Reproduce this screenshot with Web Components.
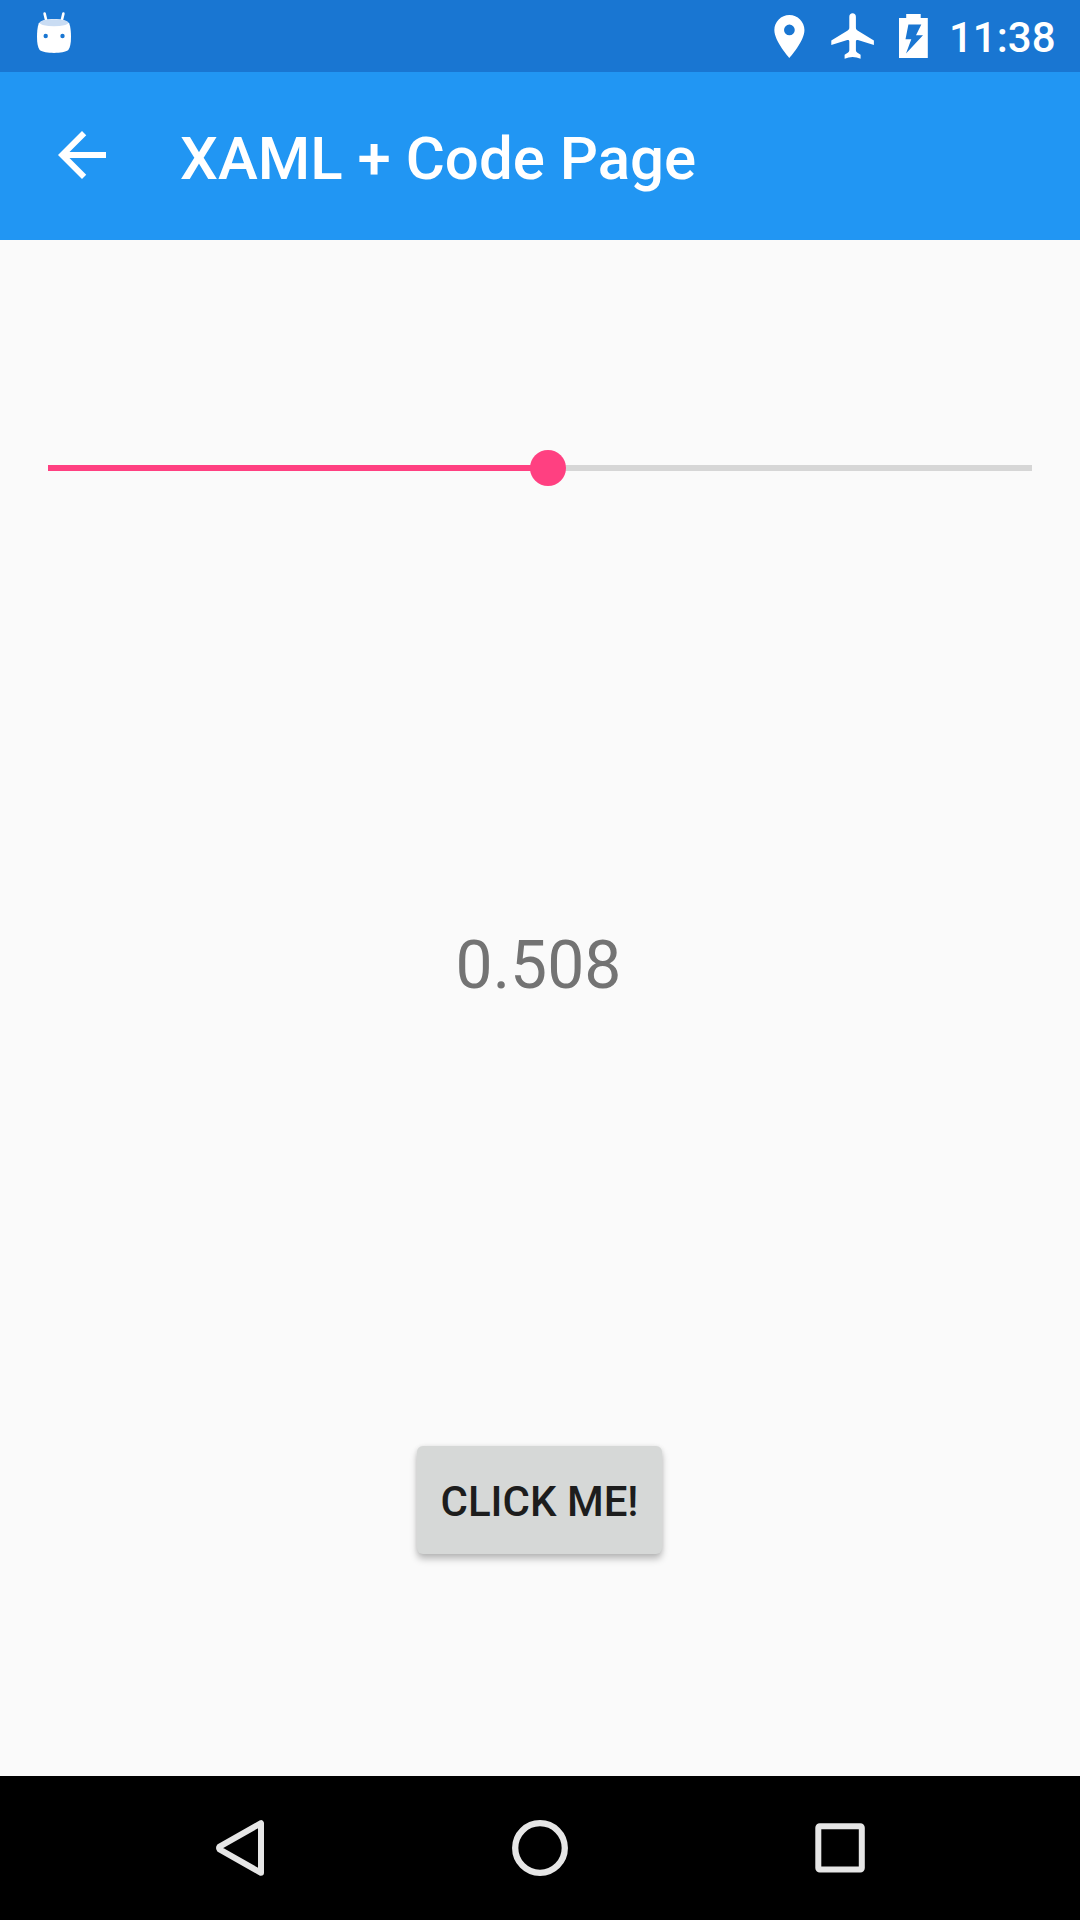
<!DOCTYPE html>
<html lang="en">
<head>
<meta charset="utf-8">
<title>XAML + Code Page</title>
<style>
html, body { margin: 0; height: 100%; }
body { font-family: Roboto, "Noto Sans", sans-serif; background: #fafafa; }
</style>
</head>
<body>
<phone-screen>
  <status-bar slot="status">11:38</status-bar>
  <app-bar slot="header">XAML + Code Page</app-bar>
  <value-slider value="0.508"></value-slider>
  <value-label>0.508</value-label>
  <raised-button>CLICK ME!</raised-button>
  <nav-bar slot="footer"></nav-bar>
</phone-screen>
<script>
const define = (name, html) => customElements.define(name, class extends HTMLElement {
  constructor() {
    super();
    this.attachShadow({ mode: "open" }).innerHTML = html;
  }
});

define("status-bar", `
<style>
:host { display: flex; align-items: center; height: 72px; box-sizing: border-box; padding: 0 0 0 36px; background: #1976d2; color: #fff; font-size: 42px; font-weight: 500; line-height: 48px; }
svg { display: block; flex: none; }
.gap { flex: 1; }
.time { box-sizing: border-box; width: 150px; padding: 3px 24.500px 0 0; text-align: right; white-space: nowrap; }
</style>
<svg width="36" height="72" viewBox="36 0 36 72">
  <path d="M44.6 13.6L46.6 22M63.4 13.6L61.4 22" stroke="#fff" stroke-width="2.6" stroke-linecap="round"/>
  <path d="M38.7 23.5C42 20 48 19 54 19s12 1 15.3 4.500C70.600 27 71 32 71 37c0 6-.8 10.500-2.700 13-2.500 2-8.300 2.900-14.300 2.900S42.200 52 39.700 50C37.800 47.500 37 43 37 37c0-5 .4-10 1.700-13.500z" fill="#fff"/>
  <ellipse cx="54" cy="22.700" rx="14.300" ry="3.500" fill="#c9dcf3"/>
  <circle cx="45.700" cy="36" r="2.200" fill="#1976d2"/><circle cx="62.500" cy="36" r="2.200" fill="#1976d2"/>
</svg>
<span class="gap"></span>
<svg width="160" height="72" viewBox="770 0 160 72" fill="#fff">
  <path transform="translate(763.600 10.600) scale(2.150)" d="M12 2C8.130 2 5 5.130 5 9c0 5.250 7 13 7 13s7-7.750 7-13c0-3.870-3.130-7-7-7zm0 9.500a2.500 2.500 0 1 1 0-5 2.500 2.500 0 0 1 0 5z"/>
  <path d="M852.600 13.300c-2 0-3.300 1.500-3.300 3.500V27.500C849.300 29 848.900 29.700 847.700 30.400L831.300 40.600V45L847.300 40.100c1.300-.4 2 .3 2 1.500V50.200c0 1-.4 1.700-1.200 2.200L844.600 54.800V58.700Q852.600 55.500 860.600 58.700V54.800L857.100 52.400c-.8-.5-1.200-1.200-1.200-2.200V41.600c0-1.200.7-1.900 2-1.500L873.900 45V40.600L857.500 30.400C856.300 29.700 855.900 29 855.900 27.500V16.800c0-2-1.300-3.500-3.300-3.500z"/>
  <path d="M899 18H906.200V14H920.700V18H927.800V58H899z"/>
  <path d="M908.400 24.500H921.300L916 35.300H923L906 53.500L911.300 39.200H905.500z" fill="#1976d2"/>
</svg>
<span class="time"><slot></slot></span>`);

define("app-bar", `
<style>
:host { display: flex; align-items: center; height: 168px; box-sizing: border-box; padding: 0 46px; background: #2196f3; color: #fff; font-size: 60px; font-weight: 500; line-height: 70px; }
svg { display: block; flex: none; margin-top: -2px; }
.title { margin-left: 62px; padding-top: 5px; white-space: nowrap; }
</style>
<svg width="72" height="72" viewBox="0 0 24 24"><path fill="#fff" d="M20 11H7.830l5.590-5.590L12 4l-8 8 8 8 1.410-1.410L7.830 13H20v-2z"/></svg>
<span class="title"><slot></slot></span>`);

customElements.define("value-slider", class extends HTMLElement {
  constructor() {
    super();
    this.attachShadow({ mode: "open" }).innerHTML = `
<style>
:host { display: flex; align-items: center; align-self: stretch; height: 36px; margin: 0 48px; }
.done, .rest { height: 6px; }
.done { background: #ff4081; width: calc(var(--value) * 100%); flex: none; }
.thumb { width: 36px; height: 36px; border-radius: 50%; background: #ff4081; flex: none; margin: 0 -18px; z-index: 1; }
.rest { background: #d6d6d6; flex: 1; }
</style>
<div class="done"></div><div class="thumb"></div><div class="rest"></div>`;
  }
  connectedCallback() {
    this.style.setProperty("--value", this.getAttribute("value"));
  }
});

define("value-label", `
<style>
:host { display: block; font-size: 66px; line-height: 78px; color: #737373; white-space: nowrap; margin-right: 3px; }
</style>
<slot></slot>`);

define("raised-button", `
<style>
:host { display: block; margin-right: 1px; }
button { display: flex; align-items: center; justify-content: center; box-sizing: border-box; width: 245px; height: 108px; margin: 0; padding: 3px 0 0; border: 0; border-radius: 6px; background: #d6d8d7; color: #1d1d1d; font: 500 42px/50px Roboto, sans-serif; white-space: nowrap; box-shadow: 0 5px 7px rgba(0,0,0,.25), 0 0 4px rgba(0,0,0,.08); }
</style>
<button><slot></slot></button>`);

define("nav-bar", `
<style>
:host { display: flex; align-items: center; justify-content: center; gap: 240px; height: 144px; background: #000; }
svg { display: block; }
</style>
<svg width="60" height="60" viewBox="210 1818 60 60" fill="none" stroke="#e6e6e6" stroke-width="6" stroke-linejoin="round"><path d="M261 1823.200V1872.800L219.600 1849.300Q218.600 1848 219.600 1846.700z"/></svg>
<svg width="60" height="60" viewBox="0 0 60 60" fill="none" stroke="#e6e6e6" stroke-width="6.300"><circle cx="30" cy="30" r="24.800"/></svg>
<svg width="60" height="60" viewBox="810 1818 60 60" fill="none" stroke="#e6e6e6" stroke-width="6"><rect x="818.300" y="1826.200" width="43.500" height="43.300" rx="1.500"/></svg>`);

define("phone-screen", `
<style>
:host { display: flex; flex-direction: column; width: 1080px; height: 1920px; overflow: hidden; background: #fafafa; }
main { flex: 1; display: flex; flex-direction: column; align-items: center; justify-content: space-between; box-sizing: border-box; padding: 210px 0 222px; }
</style>
<slot name="status"></slot>
<slot name="header"></slot>
<main><slot></slot></main>
<slot name="footer"></slot>`);
</script>
</body>
</html>
